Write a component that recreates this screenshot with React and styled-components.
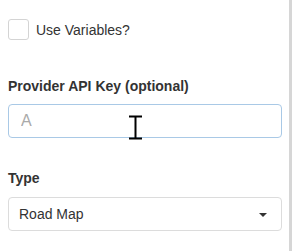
import styled, { createGlobalStyle } from 'styled-components';

const GlobalStyle = createGlobalStyle`
  html, body {
    margin: 0;
    padding: 0;
    background: #fff;
  }
  body {
    font-family: "Liberation Sans", Arial, sans-serif;
    font-size: 14px;
    line-height: 20px;
    color: #333;
  }
`;

const Frame = styled.div`
  display: flex;
  height: 251px;
  overflow: hidden;
`;

const Panel = styled.div`
  width: 274px;
  margin-left: 8px;
  padding-top: 19px;
`;

const Spacer = styled.div`
  flex: 1;
`;

const ScrollEdge = styled.div`
  width: 3px;
  background: #d6d6d6;
`;

const CheckRow = styled.label`
  display: flex;
  align-items: center;
  gap: 7px;
  height: 21px;
  cursor: pointer;
`;

const Box = styled.span`
  width: 21px;
  height: 21px;
  box-sizing: border-box;
  border: 1px solid #d4d4d4;
  border-radius: 3px;
  background: #fff;
`;

const Field = styled.div`
  margin-top: ${(p) => p.$top}px;
`;

const Label = styled.div`
  font-weight: bold;
  line-height: 20px;
  margin-bottom: ${(p) => p.$gap}px;
`;

const InputWrap = styled.div`
  position: relative;
`;

const TextInput = styled.input`
  display: block;
  width: 100%;
  height: 34px;
  box-sizing: border-box;
  padding: 0 12px;
  border: 1px solid #a9c9e6;
  border-radius: 4px;
  font-family: "Liberation Sans", Arial, sans-serif;
  font-size: 16px;
  color: #333;
  outline: none;
  background: #fff;

  &::placeholder {
    color: #aaa;
  }
`;

const Cursor = styled.svg`
  position: absolute;
  left: 120px;
  top: 11px;
  pointer-events: none;
`;

const Select = styled.div`
  display: flex;
  align-items: center;
  justify-content: space-between;
  height: 34px;
  box-sizing: border-box;
  padding: 0 14px 0 10px;
  border: 1px solid #dcdcdc;
  border-radius: 4px;
  background: #fff;
`;

const Caret = styled.span`
  width: 0;
  height: 0;
  border-left: 4px solid transparent;
  border-right: 4px solid transparent;
  border-top: 4px solid #333;
  margin-top: 1px;
`;

export default function App() {
  return (
    <>
      <GlobalStyle />
      <Frame>
        <Panel>
          <CheckRow>
            <Box />
            <span>Use Variables?</span>
          </CheckRow>

          <Field $top={36}>
            <Label $gap={8}>Provider API Key (optional)</Label>
            <InputWrap>
              <TextInput placeholder="A" />
              <Cursor width="15" height="25" viewBox="0 0 15 25">
                <path
                  d="M1 1.5h13M7.5 1.5v22M1 23.5h13"
                  stroke="#000"
                  strokeWidth="2"
                  fill="none"
                />
              </Cursor>
            </InputWrap>
          </Field>

          <Field $top={30}>
            <Label $gap={9}>Type</Label>
            <Select>
              <span>Road Map</span>
              <Caret />
            </Select>
          </Field>
        </Panel>
        <Spacer />
        <ScrollEdge />
      </Frame>
    </>
  );
}
